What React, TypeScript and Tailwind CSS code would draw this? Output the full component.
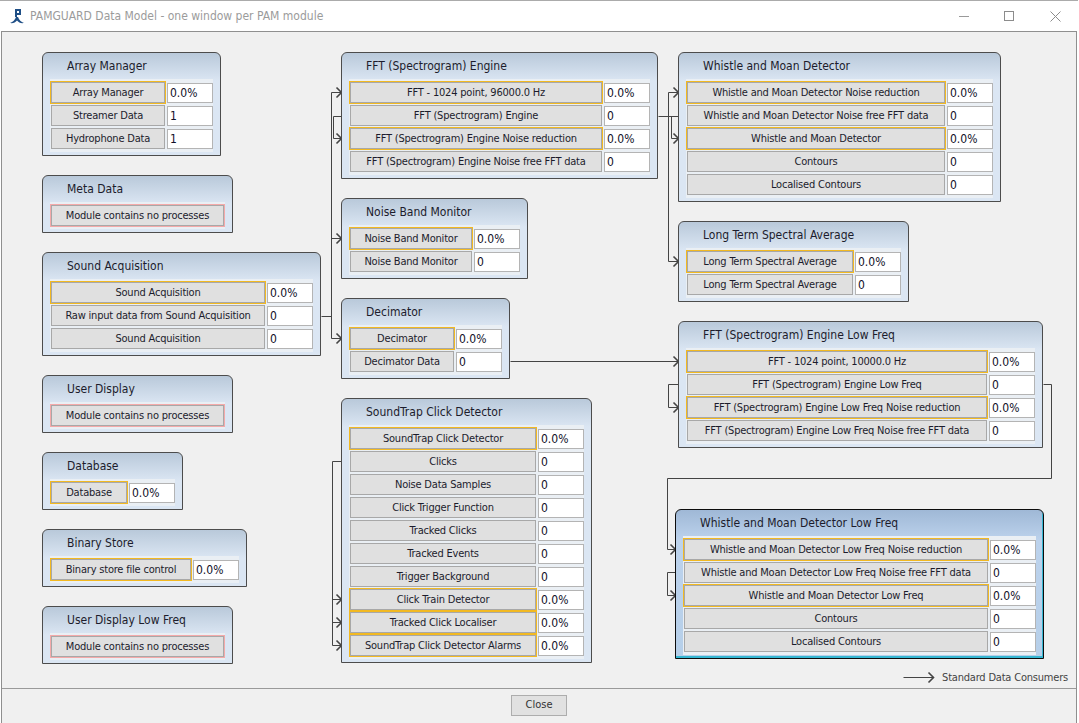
type Row = { name: string; value: string; active?: boolean };

type Module = {
  title: string;
  place: string;
  rows?: Row[];
  selected?: boolean;
};

const font = "font-['DejaVu_Sans_Condensed','Liberation_Sans',sans-serif]";

const modules: Module[] = [
  {
    title: "Array Manager",
    place: "left-[42px] top-[20px] w-[179px]",
    rows: [
      { name: "Array Manager", value: "0.0%", active: true },
      { name: "Streamer Data", value: "1" },
      { name: "Hydrophone Data", value: "1" },
    ],
  },
  { title: "Meta Data", place: "left-[42px] top-[143px] w-[191px]" },
  {
    title: "Sound Acquisition",
    place: "left-[42px] top-[220px] w-[279px]",
    rows: [
      { name: "Sound Acquisition", value: "0.0%", active: true },
      { name: "Raw input data from Sound Acquisition", value: "0" },
      { name: "Sound Acquisition", value: "0" },
    ],
  },
  { title: "User Display", place: "left-[42px] top-[343px] w-[191px]" },
  {
    title: "Database",
    place: "left-[42px] top-[420px] w-[141px]",
    rows: [{ name: "Database", value: "0.0%", active: true }],
  },
  {
    title: "Binary Store",
    place: "left-[42px] top-[497px] w-[205px]",
    rows: [{ name: "Binary store file control", value: "0.0%", active: true }],
  },
  { title: "User Display Low Freq", place: "left-[42px] top-[574px] w-[191px]" },
  {
    title: "FFT (Spectrogram) Engine",
    place: "left-[341px] top-[20px] w-[317px]",
    rows: [
      { name: "FFT - 1024 point, 96000.0 Hz", value: "0.0%", active: true },
      { name: "FFT (Spectrogram) Engine", value: "0" },
      { name: "FFT (Spectrogram) Engine Noise reduction", value: "0.0%", active: true },
      { name: "FFT (Spectrogram) Engine Noise free FFT data", value: "0" },
    ],
  },
  {
    title: "Noise Band Monitor",
    place: "left-[341px] top-[166px] w-[187px]",
    rows: [
      { name: "Noise Band Monitor", value: "0.0%", active: true },
      { name: "Noise Band Monitor", value: "0" },
    ],
  },
  {
    title: "Decimator",
    place: "left-[341px] top-[266px] w-[169px]",
    rows: [
      { name: "Decimator", value: "0.0%", active: true },
      { name: "Decimator Data", value: "0" },
    ],
  },
  {
    title: "SoundTrap Click Detector",
    place: "left-[341px] top-[366px] w-[251px]",
    rows: [
      { name: "SoundTrap Click Detector", value: "0.0%", active: true },
      { name: "Clicks", value: "0" },
      { name: "Noise Data Samples", value: "0" },
      { name: "Click Trigger Function", value: "0" },
      { name: "Tracked Clicks", value: "0" },
      { name: "Tracked Events", value: "0" },
      { name: "Trigger Background", value: "0" },
      { name: "Click Train Detector", value: "0.0%", active: true },
      { name: "Tracked Click Localiser", value: "0.0%", active: true },
      { name: "SoundTrap Click Detector Alarms", value: "0.0%", active: true },
    ],
  },
  {
    title: "Whistle and Moan Detector",
    place: "left-[678px] top-[20px] w-[323px]",
    rows: [
      { name: "Whistle and Moan Detector Noise reduction", value: "0.0%", active: true },
      { name: "Whistle and Moan Detector Noise free FFT data", value: "0" },
      { name: "Whistle and Moan Detector", value: "0.0%", active: true },
      { name: "Contours", value: "0" },
      { name: "Localised Contours", value: "0" },
    ],
  },
  {
    title: "Long Term Spectral Average",
    place: "left-[678px] top-[189px] w-[231px]",
    rows: [
      { name: "Long Term Spectral Average", value: "0.0%", active: true },
      { name: "Long Term Spectral Average", value: "0" },
    ],
  },
  {
    title: "FFT (Spectrogram) Engine Low Freq",
    place: "left-[678px] top-[289px] w-[365px]",
    rows: [
      { name: "FFT - 1024 point, 10000.0 Hz", value: "0.0%", active: true },
      { name: "FFT (Spectrogram) Engine Low Freq", value: "0" },
      { name: "FFT (Spectrogram) Engine Low Freq Noise reduction", value: "0.0%", active: true },
      { name: "FFT (Spectrogram) Engine Low Freq Noise free FFT data", value: "0" },
    ],
  },
  {
    title: "Whistle and Moan Detector Low Freq",
    place: "left-[675px] top-[477px] w-[369px]",
    selected: true,
    rows: [
      { name: "Whistle and Moan Detector Low Freq Noise reduction", value: "0.0%", active: true },
      { name: "Whistle and Moan Detector Low Freq Noise free FFT data", value: "0" },
      { name: "Whistle and Moan Detector Low Freq", value: "0.0%", active: true },
      { name: "Contours", value: "0" },
      { name: "Localised Contours", value: "0" },
    ],
  },
];

// lines and arrow tips in page coordinates
const lines = [
  "M321 316H331",
  "M341 92H331V338H341",
  "M331 238H341",
  "M341 116H333V138H341",
  "M658 116H678",
  "M678 92H668V261H678",
  "M671 116V138H678",
  "M510 361H678",
  "M678 384H668V407H678",
  "M1043 384H1051V478H667V549H675",
  "M675 572H667V595H675",
  "M341 461H332V645H341",
  "M332 599H341",
  "M332 622H341",
  "M903 677H933",
];

const tips = [
  [341, 92],
  [341, 138],
  [341, 238],
  [341, 338],
  [678, 92],
  [678, 138],
  [678, 261],
  [678, 361],
  [678, 407],
  [675, 549],
  [675, 595],
  [341, 599],
  [341, 622],
  [341, 645],
  [933, 677],
];

function ProcessRow({ name, value, active }: Row) {
  return (
    <div className="flex h-[23px] items-center">
      <div className={`flex h-[23px] min-w-0 flex-1 border ${active ? "border-[#f2b922]" : "border-transparent"}`}>
        <div className="flex flex-1 items-center justify-center border border-[#a8a8a8] bg-[#e0e0e0] pt-[2px] text-[11px] tracking-[-0.2px] whitespace-nowrap text-[#1c1c2c]">
          {name}
        </div>
      </div>
      <div className="ml-px flex h-[20px] w-[46px] items-center border border-[#b4b4b4] bg-white pl-[2px] text-[12px] text-[#101028]">
        {value}
      </div>
    </div>
  );
}

function ModuleBox({ title, place, rows, selected }: Module) {
  return (
    <div
      className={`absolute ${place} rounded-t-[6px] border px-[8px] pb-[3px] ${
        selected
          ? "border-[#0c0c0c] bg-[linear-gradient(#9fb8d6,#bcd2ec_30px,#b6cfe9)] shadow-[inset_-1px_-2px_0_#35b6d2]"
          : "border-[#4c4c4c] bg-[linear-gradient(#b9c9da,#dbe6f3_28px)]"
      }`}
    >
      <div className="flex h-[26px] items-center pl-[16px] text-[12px] whitespace-nowrap text-[#1c1c2c]">{title}</div>
      <div className="-mx-px bg-[#eaeff4] py-[2px]">
        {rows ? (
          rows.map((row, i) => <ProcessRow key={i} {...row} />)
        ) : (
          <div className="flex h-[23px] border border-[#f4a9a9]">
            <div className="flex flex-1 items-center justify-center border border-[#a8a8a8] bg-[#e0e0e0] pt-[2px] text-[11px] tracking-[-0.2px] whitespace-nowrap text-[#1c1c2c]">
              Module contains no processes
            </div>
          </div>
        )}
      </div>
    </div>
  );
}

export default function App() {
  return (
    <div className={`flex h-[723px] w-[1078px] flex-col border-t border-[#ababab] bg-white ${font}`}>
      <div className="flex h-[30px] shrink-0 items-center pl-[9px]">
        <svg width="16" height="16" viewBox="0 0 16 16" fill="none">
          <path d="M1 15C4 14 6 12 7 9H9C10 12 12 14 15 15C12 15.5 9.5 14.5 8 12.5C6.5 14.5 4 15.5 1 15Z" fill="#1f4f86" />
          <path d="M7 9V2H11V6H8" stroke="#1f4f86" strokeWidth="2" />
        </svg>
        <span className="ml-[5px] text-[12px] text-[#9b9b9b]">PAMGUARD Data Model - one window per PAM module</span>
        <div className="ml-auto flex items-center">
          <div className="h-px w-[10px] bg-[#9a9a9a]" />
          <div className="ml-[35px] size-[10px] border border-[#8c8c8c]" />
          <svg className="mr-[17px] ml-[36px]" width="11" height="11" viewBox="0 0 11 11" stroke="#8c8c8c">
            <path d="M0.5 0.5L10.5 10.5M10.5 0.5L0.5 10.5" />
          </svg>
        </div>
      </div>

      <div className="mx-px flex min-h-0 flex-1 flex-col border-x border-t border-[#8f8f8f] bg-[#f0f0f0]">
        <div className="relative h-[657px] shrink-0 border-b border-[#9a9a9a]">
          <svg className="absolute top-0 left-0" width="1079" height="656" viewBox="1.5 31.5 1079 656" fill="none" stroke="#444" strokeWidth="1">
            {lines.map((d) => (
              <path key={d} d={d} />
            ))}
            {tips.map(([x, y]) => (
              <path key={`${x}-${y}`} d={`M${x - 5} ${y - 5}L${x} ${y}L${x - 5} ${y + 5}`} strokeWidth="1.6" />
            ))}
          </svg>
          <div className="-translate-x-[2px]">
            {modules.map((m) => (
              <ModuleBox key={m.title} {...m} />
            ))}
          </div>
          <span className="absolute top-[638px] right-[8px] text-[11px] tracking-[-0.2px] text-[#444]">Standard Data Consumers</span>
        </div>
        <div className="flex flex-1 items-start justify-center pt-[6px]">
          <button className="h-[21px] w-[56px] border border-[#adadad] bg-[#e1e1e1] text-[11px] text-[#333]">Close</button>
        </div>
      </div>
    </div>
  );
}
